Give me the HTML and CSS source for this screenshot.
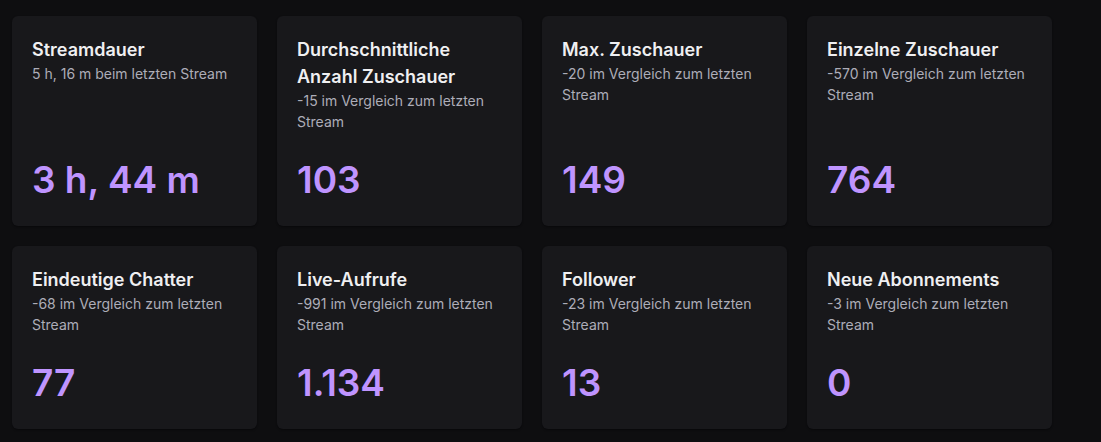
FILE: index.html
```html
<!DOCTYPE html>
<html lang="de">
  <head>
    <meta charset="UTF-8" />
    <meta name="viewport" content="width=device-width, initial-scale=1.0" />
    <title>Stream-Statistiken</title>
    <link rel="stylesheet" href="styles.css">
  </head>

  <body>
    <div class="stats">
      <div class="card">
        <p class="title">Streamdauer</p>
        <p class="sub">5 h, 16 m beim letzten Stream</p>
        <p class="value">3 h, 44 m</p>
      </div>
      <div class="card">
        <p class="title">Durchschnittliche Anzahl Zuschauer</p>
        <p class="sub">-15 im Vergleich zum letzten Stream</p>
        <p class="value">103</p>
      </div>
      <div class="card">
        <p class="title">Max. Zuschauer</p>
        <p class="sub">-20 im Vergleich zum letzten Stream</p>
        <p class="value">149</p>
      </div>
      <div class="card">
        <p class="title">Einzelne Zuschauer</p>
        <p class="sub">-570 im Vergleich zum letzten Stream</p>
        <p class="value">764</p>
      </div>

      <div class="card">
        <p class="title">Eindeutige Chatter</p>
        <p class="sub">-68 im Vergleich zum letzten Stream</p>
        <p class="value">77</p>
      </div>
      <div class="card">
        <p class="title">Live-Aufrufe</p>
        <p class="sub">-991 im Vergleich zum letzten Stream</p>
        <p class="value">1.134</p>
      </div>
      <div class="card">
        <p class="title">Follower</p>
        <p class="sub">-23 im Vergleich zum letzten Stream</p>
        <p class="value">13</p>
      </div>
      <div class="card">
        <p class="title">Neue Abonnements</p>
        <p class="sub">-3 im Vergleich zum letzten Stream</p>
        <p class="value">0</p>
      </div>
    </div>
  </body>
</html>
```

FILE: styles.css
```css
  body {
    margin: 0;
    background: #0e0e10;
    font-family: Inter, "Noto Sans", sans-serif;
    color: #efeff1;
  }

  .stats {
    width: 1040px;
    padding: 16px 12px;
    display: grid;
    grid-template-columns: repeat(4, 1fr);
    gap: 20px;
  }

  .card {
    display: flex;
    flex-direction: column;
    background: #18181b;
    border-radius: 6px;
    padding: 20px 20px 24px;
    box-shadow: 0 1px 2px rgba(0, 0, 0, 0.4);
  }

  .card p {
    margin: 0;
  }

  .title {
    font-size: 18px;
    line-height: 27px;
    font-weight: 600;
    color: #efeff1;
  }

  .sub {
    font-size: 14px;
    line-height: 21px;
    color: #adadb8;
  }

  .value {
    margin-top: auto !important;
    padding-top: 26px;
    font-size: 37px;
    line-height: 44px;
    font-weight: 600;
    color: #bf94ff;
  }
```
